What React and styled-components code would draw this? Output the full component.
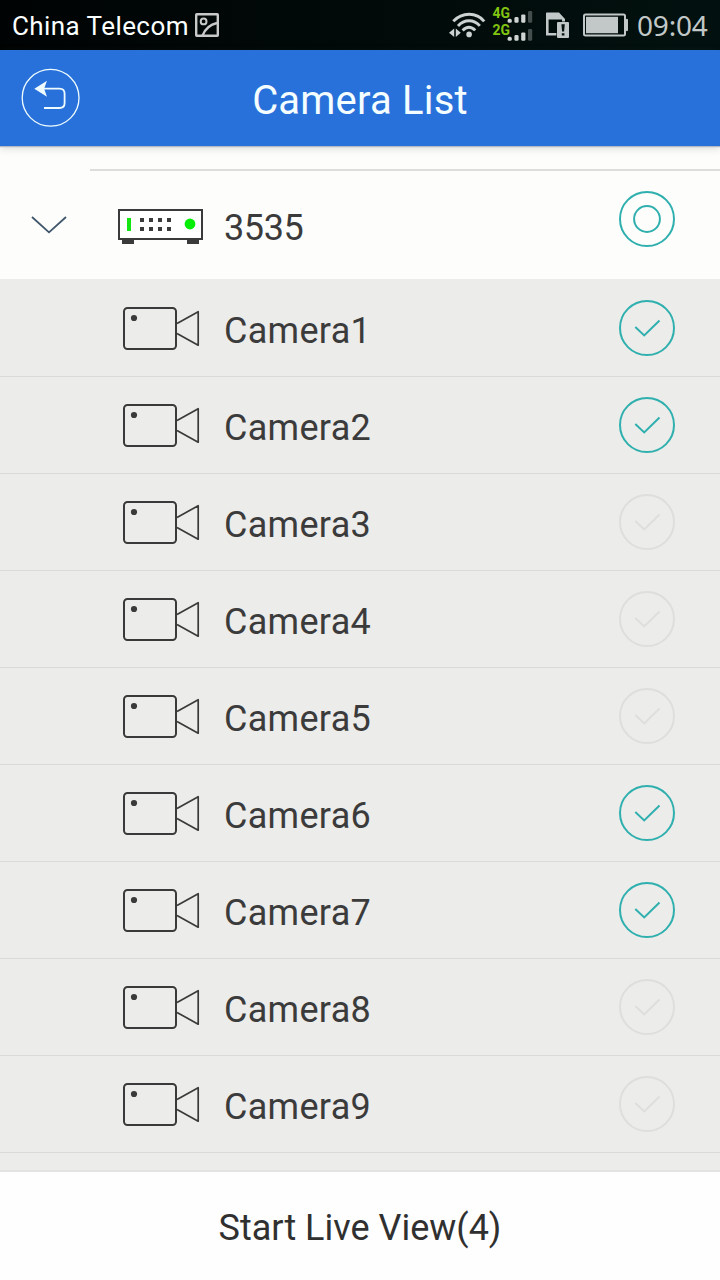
import React from 'react'
import { useState } from 'react';
import styled, { createGlobalStyle } from 'styled-components'

const GlobalStyle = createGlobalStyle`
    * {
        box-sizing: border-box;
    }
    body {
        margin: 0;
        font-family: Roboto, "Liberation Sans", sans-serif;
    }
    svg {
        display: block;
        flex-shrink: 0;
    }
`;

const Screen = styled.div`
    width: 720px;
    height: 1280px;
    overflow: hidden;
    display: flex;
    flex-direction: column;
    background-color: #ececeb;
`;

const StatusBar = styled.div`
    height: 50px;
    flex-shrink: 0;
    display: flex;
    align-items: center;
    padding: 0 12px;
    background: linear-gradient(90deg, #000303, #02110f);
`;

const Carrier = styled.span`
    width: 183px;
    padding-top: 2px;
    font-size: 26px;
    line-height: 30px;
    letter-spacing: 0.42px;
    color: #fbffff;
`;

const StatusIcons = styled.div`
    margin-left: auto;
    display: flex;
    align-items: center;
`;

const SignalBox = styled.div`
    margin-left: 6px;
`;

const SimBox = styled.div`
    margin: 0 13px 0 12px;
`;

const Clock = styled.span`
    width: 71px;
    margin-left: 8px;
    padding-bottom: 1px;
    font-family: "Noto Sans", "Open Sans", sans-serif;
    font-size: 28px;
    line-height: 32px;
    letter-spacing: -0.2px;
    white-space: nowrap;
    color: #c1c8c7;
`;

const Header = styled.header`
    height: 96px;
    flex-shrink: 0;
    display: grid;
    grid-template-columns: 100px 1fr 100px;
    align-items: center;
    background-color: #2871da;
    z-index: 1;
    box-shadow: 0 1px 1px #b4b9c4, 0 2px 8px rgba(60, 60, 60, 0.2);
`;

const BackButton = styled.button`
    width: 60px;
    height: 60px;
    margin-left: 20px;
    padding: 0;
    border: none;
    background: none;
    cursor: pointer;
`;

const Title = styled.h1`
    margin: 0;
    padding-top: 5px;
    font-size: 40px;
    line-height: 48px;
    font-weight: 400;
    letter-spacing: 0.2px;
    text-align: center;
    color: #f4fdff;
`;

const List = styled.main`
    flex: 1;
    min-height: 0;
    overflow: hidden;
`;

const DeviceGroup = styled.div`
    height: 133px;
    padding-top: 23px;
    background-color: #fdfdfc;
`;

const Divider = styled.div`
    height: 2px;
    margin-left: 90px;
    background-color: #dddddc;
`;

const DeviceRow = styled.div`
    height: 108px;
    display: grid;
    grid-template-columns: 116px 108px 1fr 102px;
    align-items: center;
`;

const Toggle = styled.div`
    padding-left: 30px;
    cursor: pointer;
`;

const DeviceIcon = styled.div`
    padding-top: 4px;
`;

const Name = styled.span`
    padding-top: 5px;
    font-size: 36px;
    line-height: 44px;
    letter-spacing: ${(props) => props.$spacing || 0.3}px;
    color: #3b3b3b;
`;

const SelectAll = styled.div`
    padding-bottom: 12px;
    cursor: pointer;
`;

const Cameras = styled.div`
    padding-top: 1px;
`;

const CameraRow = styled.div`
    height: 97px;
    display: grid;
    grid-template-columns: 121px 103px 1fr 102px;
    align-items: center;
    border-bottom: 1px solid #dadad9;
    cursor: pointer;
`;

const Footer = styled.button`
    height: 110px;
    flex-shrink: 0;
    border: none;
    border-top: 2px solid #e3e3e3;
    padding: 4px 0 0;
    font-family: inherit;
    font-size: 36px;
    color: #303030;
    background-color: #fefefe;
    cursor: pointer;
`;

const PictureIcon = () => (
    <svg width="24" height="24" viewBox="0 0 24 24" fill="none" stroke="#c9c9c9" strokeWidth="2">
        <rect x="1.2" y="1.2" width="21.6" height="21.6" rx="0.6" strokeWidth="2.4" />
        <circle cx="8.6" cy="8.4" r="2.9" />
        <path d="M7.6 22.4C10.4 15.4 14.8 11.6 22 10" strokeWidth="2.4" />
    </svg>
)

const WifiIcon = () => (
    <svg width="37" height="26" viewBox="0 0 37 26" fill="none" stroke="#ccd2d1" strokeWidth="2.9">
        <path d="M4.3 9.3C13 -0.1 27.6 -0.1 35.2 9.3" />
        <path d="M9 13.9C15.2 7.1 25 7.1 30.8 13.9" />
        <path d="M13.6 18.4C17.6 14.2 22.4 14.2 26.2 18.4" />
        <circle cx="20.1" cy="22.4" r="2.8" fill="#ccd2d1" stroke="none" />
        <path d="M5.2 16.4V25L0 20.7ZM6.8 16.4V25L11.8 20.7Z" fill="#ccd2d1" stroke="none" />
    </svg>
)

const SignalIcon = () => (
    <svg width="42" height="38" viewBox="0 0 42 38">
        <g fontFamily="Roboto, sans-serif" fontSize="14.5" fontWeight="700" fill="#82c412">
            <text x="0.5" y="12" textLength="17.5" lengthAdjust="spacingAndGlyphs">4G</text>
            <text x="0.5" y="29" textLength="17.5" lengthAdjust="spacingAndGlyphs">2G</text>
        </g>
        {[0, 18].map((y) => (
            <g key={y} fill="#d0d5d4">
                <rect x="15.6" y={y + 12.8} width="4.2" height="4" rx="1.6" />
                <rect x="22.4" y={y + 11} width="4.2" height="5.8" rx="1.4" />
                <rect x="29.2" y={y + 8.4} width="4.2" height="8.4" rx="1.2" />
                <rect x="36" y={y + 5} width="4.2" height="11.8" rx="1.2" fill="#444e4c" />
            </g>
        ))}
    </svg>
)

const SimIcon = () => (
    <svg width="24" height="27" viewBox="0 0 24 27">
        <path d="M0 1.2Q0 0.5 0.8 0.5H13L19 7V9.6H16V7.6H2.6V21H10.4V23.4H0Z" fill="#c1c8c7" />
        <rect x="11" y="10" width="12" height="16" rx="1" fill="#c1c8c7" />
        <path d="M15.4 12.2H18.8L18.1 19.6H16.1ZM15.8 21.2H18.4V23.6H15.8Z" fill="#04110f" />
    </svg>
)

const BatteryIcon = () => (
    <svg width="46" height="24" viewBox="0 0 46 24">
        <rect x="1" y="1.5" width="41" height="21" rx="1.5" fill="none" stroke="#c1c8c7" strokeWidth="2" />
        <path d="M43 6.4H44.5V17.6H43Z" fill="#c1c8c7" stroke="#c1c8c7" strokeLinejoin="round" />
        <rect x="3" y="3.8" width="32" height="16.4" fill="#c1c8c7" />
    </svg>
)

const BackIcon = () => (
    <svg width="60" height="60" viewBox="0 0 60 60" fill="none" stroke="#effcff">
        <circle cx="30.6" cy="29.8" r="28.4" strokeWidth="1.3" />
        <path d="M24 20.7H39.5Q44.6 20.7 44.6 25.8V35Q44.6 40 39.5 40H24" strokeWidth="1.8" />
        <path d="M14.3 20.8L27 12.8L24.1 20.7L27 28.8Z" fill="#effcff" stroke="none" />
    </svg>
)

const ChevronIcon = () => (
    <svg width="38" height="20" viewBox="0 0 38 20" fill="none" stroke="#40566b" strokeWidth="1.8">
        <path d="M2 2L19 17.4L36 2" />
    </svg>
)

const RecorderIcon = () => (
    <svg width="88" height="36" viewBox="0 0 88 36">
        <rect x="3" y="1" width="83" height="29" fill="#fff" stroke="#3a3a3a" strokeWidth="2" />
        <path d="M6 30H18V35H6ZM71 30H83V35H71Z" fill="#3a3a3a" />
        <rect x="11" y="9" width="4" height="13" fill="#12e512" />
        <circle cx="74" cy="15" r="5.4" fill="#06ed06" />
        {[24, 33, 42, 51].map((x) => (
            <path key={x} d={`M${x} 9h4v4h-4zM${x} 18h4v4h-4z`} fill="#3a3a3a" />
        ))}
    </svg>
)

const CameraIcon = () => (
    <svg width="80" height="46" viewBox="0 0 80 46" fill="none" stroke="#3a3a3a">
        <rect x="3" y="3" width="52" height="41" rx="3.5" strokeWidth="2" />
        <circle cx="13" cy="13" r="3.1" fill="#3a3a3a" stroke="none" />
        <path d="M56 18.5L77.2 6.7V40.2L56 28.4" strokeWidth="1.7" strokeLinejoin="round" />
    </svg>
)

const SelectAllIcon = () => (
    <svg width="58" height="58" viewBox="0 0 58 58" fill="none" stroke="#2fb0ae" strokeWidth="2">
        <circle cx="29" cy="29" r="27" />
        <circle cx="29" cy="29" r="12.9" />
    </svg>
)

const CheckIcon = ({ checked }) => (
    <svg width="58" height="58" viewBox="0 0 58 58" fill="none" stroke={checked ? '#2fb0ae' : '#dededd'} strokeWidth="2">
        <circle cx="29" cy="29" r="27" />
        <path d="M17.3 28L26.2 36.4L41.5 21.5" />
    </svg>
)

const cameras = [1, 2, 3, 4, 5, 6, 7, 8, 9]

const App = () => {
    const [open, setOpen] = useState(true)
    const [selected, setSelected] = useState([1, 2, 6, 7])

    const handleSelect = (id) => {
        setSelected(selected.includes(id) ? selected.filter((item) => item !== id) : [...selected, id])
    }

    return (
        <>
        <GlobalStyle />
        <Screen>
            <StatusBar>
                <Carrier>China Telecom</Carrier>
                <PictureIcon />
                <StatusIcons>
                    <WifiIcon />
                    <SignalBox><SignalIcon /></SignalBox>
                    <SimBox><SimIcon /></SimBox>
                    <BatteryIcon />
                    <Clock>09:04</Clock>
                </StatusIcons>
            </StatusBar>
            <Header>
                <BackButton aria-label="Back"><BackIcon /></BackButton>
                <Title>Camera List</Title>
            </Header>
            <List>
                <DeviceGroup>
                    <Divider />
                    <DeviceRow>
                        <Toggle onClick={() => setOpen(!open)}><ChevronIcon /></Toggle>
                        <DeviceIcon><RecorderIcon /></DeviceIcon>
                        <Name $spacing={-0.4}>3535</Name>
                        <SelectAll onClick={() => setSelected(cameras)}>
                            <SelectAllIcon />
                        </SelectAll>
                    </DeviceRow>
                </DeviceGroup>
                {open && (
                    <Cameras>
                        {cameras.map((id) => (
                            <CameraRow key={id} onClick={() => handleSelect(id)}>
                                <span />
                                <CameraIcon />
                                <Name>Camera{id}</Name>
                                <CheckIcon checked={selected.includes(id)} />
                            </CameraRow>
                        ))}
                    </Cameras>
                )}
            </List>
            <Footer>Start Live View({selected.length})</Footer>
        </Screen>
        </>
    )
}

export default App
